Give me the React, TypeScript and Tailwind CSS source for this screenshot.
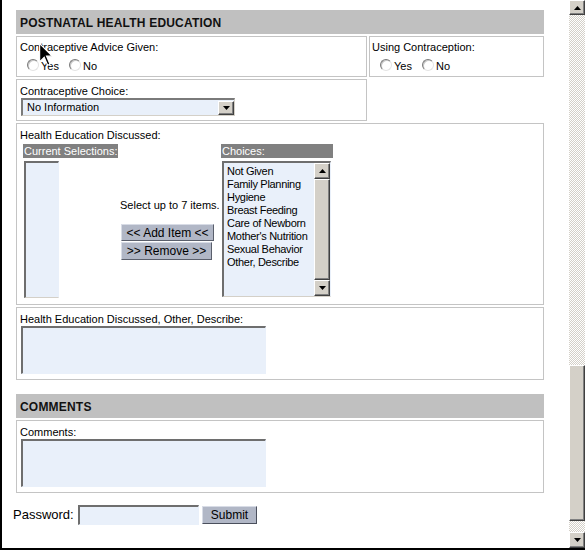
import React from "react";

// small XP-style pieces
function Radio({ label }: { label: string }) {
  return (
    <span className="flex items-center">
      <span className="w-[12px] h-[12px] rounded-full bg-white border border-t-[#7a7a7a] border-l-[#7a7a7a] border-r-[#e4e4e4] border-b-[#e4e4e4] shadow-[inset_1px_1px_0_#c8c8c8]" />
      <span className="ml-[2px] mt-[4px] text-[11px] leading-[13px]">{label}</span>
    </span>
  );
}

function Arrow({ dir }: { dir: "up" | "down" }) {
  return (
    <svg width="7" height="4" viewBox="0 0 7 4" className="block">
      {dir === "up" ? <path d="M3.5 0 L7 4 L0 4 Z" fill="#000" /> : <path d="M0 0 L7 0 L3.5 4 Z" fill="#000" />}
    </svg>
  );
}

function SbButton({ dir, h = 16 }: { dir: "up" | "down"; h?: number }) {
  return (
    <div
      className="w-full flex items-center justify-center bg-[#d4d0c8] border border-t-white border-l-white border-r-[#404040] border-b-[#404040] shadow-[inset_-1px_-1px_0_#808080]"
      style={{ height: h }}
    >
      <Arrow dir={dir} />
    </div>
  );
}

function Box({ className = "", children }: { className?: string; children?: React.ReactNode }) {
  return <div className={"border border-[#c4c4c4] bg-white " + className}>{children}</div>;
}

function Header({ title }: { title: string }) {
  return (
    <div className="h-[24px] bg-[#c0c0c0] flex items-center pl-[4px] pt-[1px] text-[12px] font-bold tracking-[0.2px] text-[#111]">
      {title}
    </div>
  );
}

function TextBox() {
  return (
    <div className="w-[245px] h-[48px] bg-[#e9f0fa] border-t-2 border-l-2 border-t-[#6e6e6e] border-l-[#6e6e6e] border-r border-b border-r-[#e9f0fa] border-b-[#e9f0fa]" />
  );
}

const choices = [
  "Not Given",
  "Family Planning",
  "Hygiene",
  "Breast Feeding",
  "Care of Newborn",
  "Mother's Nutrition",
  "Sexual Behavior",
  "Other, Describe",
];

export default function App() {
  return (
    <div className="w-[585px] h-[553px] bg-white font-['Liberation_Sans',Arial,sans-serif] text-black overflow-hidden relative">
      <div className="flex h-[550px] border-l-2 border-b-2 border-black">
        <main className="flex-1 pl-[14px] pt-[10px] pr-[25px]">
          <Header title="POSTNATAL HEALTH EDUCATION" />

          {/* row 1 */}
          <div className="flex gap-[2px] mt-[2px]">
            <Box className="w-[351px] h-[41px] pl-[3px] pt-[4px]">
              <div className="text-[11px] leading-[13px]">Contraceptive Advice Given:</div>
              <div className="flex items-center gap-[10px] pl-[7px] mt-[2px]">
                <Radio label="Yes" />
                <Radio label="No" />
              </div>
            </Box>
            <Box className="w-[175px] h-[41px] pl-[2px] pt-[4px]">
              <div className="text-[11px] leading-[13px]">Using Contraception:</div>
              <div className="flex items-center gap-[10px] pl-[8px] mt-[2px]">
                <Radio label="Yes" />
                <Radio label="No" />
              </div>
            </Box>
          </div>

          {/* row 2 */}
          <Box className="w-[351px] h-[42px] mt-[2px] pl-[3px] pt-[5px]">
            <div className="text-[11px] leading-[13px]">Contraceptive Choice:</div>
            <div className="ml-[1px] w-[214px] h-[18px] bg-[#e9f0fa] border-t-2 border-l-2 border-t-[#7a7a7a] border-l-[#7a7a7a] border-r border-b border-r-[#d4d0c8] border-b-[#d4d0c8] flex items-center justify-between">
              <span className="pl-[4px] text-[11px] leading-[13px]">No Information</span>
              <div className="w-[16px] h-[14px]">
                <SbButton dir="down" h={14} />
              </div>
            </div>
          </Box>

          {/* health education discussed */}
          <Box className="h-[182px] mt-[2px] pl-[3px] pt-[5px]">
            <div className="text-[11px] leading-[13px]">Health Education Discussed:</div>
            <div className="flex mt-[2px] pl-[3px]">
              <div className="w-[95px]">
                <div className="h-[14px] bg-[#808080] text-white text-[11px] leading-[14px] pl-[1px]">Current Selections:</div>
                <div className="ml-[1px] mt-[3px] w-[35px] h-[137px] bg-[#e9f0fa] border-t-2 border-l-2 border-t-[#6e6e6e] border-l-[#6e6e6e] border-r border-b border-r-[#e9f0fa] border-b-[#d4d0c8]" />
              </div>
              <div className="w-[103px] pl-[2px] pt-[55px]">
                <div className="text-[11px] leading-[13px] whitespace-nowrap">Select up to 7 items.</div>
                <button className="mt-[12px] ml-[1px] w-[93px] h-[17px] bg-[#b1b7c6] border border-t-[#d8dce6] border-l-[#d8dce6] border-r-[#5a5f6c] border-b-[#5a5f6c] text-[12px] leading-[14px] block">
                  &lt;&lt; Add Item &lt;&lt;
                </button>
                <button className="mt-[1px] ml-[1px] w-[91px] h-[18px] bg-[#b1b7c6] border border-t-[#d8dce6] border-l-[#d8dce6] border-r-[#5a5f6c] border-b-[#5a5f6c] text-[12px] leading-[14px] block">
                  &gt;&gt; Remove &gt;&gt;
                </button>
              </div>
              <div className="w-[112px]">
                <div className="h-[14px] bg-[#808080] text-white text-[11px] leading-[14px] pl-[1px]">Choices:</div>
                <div className="ml-[1px] mt-[3px] w-[109px] h-[136px] bg-[#e9f0fa] border-t-2 border-l-2 border-t-[#6e6e6e] border-l-[#6e6e6e] border-r border-b border-r-[#e9f0fa] border-b-[#d4d0c8] flex">
                  <div className="flex-1 pl-[3px] pt-[2px]">
                    {choices.map((c) => (
                      <div key={c} className="text-[11px] leading-[13px] tracking-[-0.3px] whitespace-nowrap">
                        {c}
                      </div>
                    ))}
                  </div>
                  <div className="w-[16px] flex flex-col">
                    <SbButton dir="up" h={16} />
                    <div className="flex-1 bg-[#d4d0c8] border border-t-white border-l-white border-r-[#404040] border-b-[#404040] shadow-[inset_-1px_-1px_0_#808080]" />
                    <SbButton dir="down" h={16} />
                  </div>
                </div>
              </div>
            </div>
          </Box>

          {/* other describe */}
          <Box className="h-[73px] mt-[2px] pl-[4px] pt-[5px]">
            <div className="text-[11px] leading-[13px] -ml-[1px]">Health Education Discussed, Other, Describe:</div>
            <TextBox />
          </Box>

          <div className="mt-[14px]">
            <Header title="COMMENTS" />
          </div>
          <Box className="h-[73px] mt-[2px] pl-[4px] pt-[5px]">
            <div className="text-[11px] leading-[13px] -ml-[1px]">Comments:</div>
            <TextBox />
          </Box>

          {/* password */}
          <div className="flex items-center mt-[12px] -ml-[3px]">
            <span className="text-[13px] leading-[16px] w-[65px]">Password:</span>
            <div className="w-[121px] h-[20px] bg-[#e9f0fa] border-t-2 border-l-2 border-t-[#6e6e6e] border-l-[#6e6e6e] border-r border-b border-r-[#e9f0fa] border-b-[#e9f0fa]" />
            <button className="ml-[3px] w-[55px] h-[18px] bg-[#b1b7c6] border border-t-[#d8dce6] border-l-[#d8dce6] border-r-[#4a4f5c] border-b-[#4a4f5c] text-[12px] leading-[14px]">
              Submit
            </button>
          </div>
        </main>

        {/* window scrollbar */}
        <div className="w-[16px] h-[548px] flex flex-col">
          <SbButton dir="up" h={15} />
          <div className="h-[350px] bg-[repeating-conic-gradient(#d4d0c8_0_25%,#fff_0_50%)] bg-[length:2px_2px]" />
          <div className="h-[156px] bg-[#d4d0c8] border border-t-white border-l-white border-r-[#404040] border-b-[#404040] shadow-[inset_-1px_-1px_0_#808080]" />
          <div className="flex-1 bg-[repeating-conic-gradient(#d4d0c8_0_25%,#fff_0_50%)] bg-[length:2px_2px]" />
          <SbButton dir="down" h={16} />
        </div>
      </div>

      {/* mouse pointer */}
      <svg width="15" height="24" viewBox="0 0 13 21" className="absolute left-[39px] top-[43px]">
        <path d="M0.5 0.5 L0.5 16.5 L4.5 12.5 L7.5 19.5 L9.5 18.5 L6.5 11.5 L11.5 11.5 Z" fill="#000" stroke="#fff" strokeWidth="1" />
      </svg>
    </div>
  );
}
